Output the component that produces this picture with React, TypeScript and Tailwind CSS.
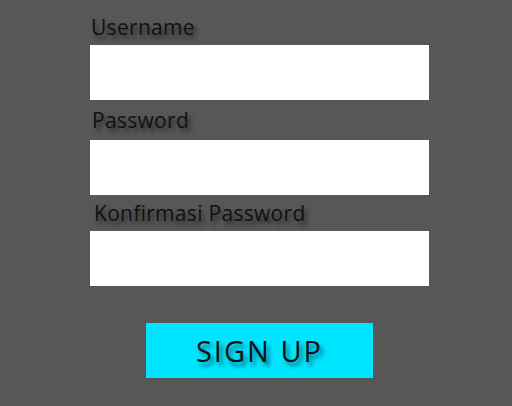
export default function App() {
  return (
    <div className="min-h-[406px] w-full bg-[#575757] font-['Open_Sans',sans-serif]">
      <div className="ml-[90px] w-[339px] pt-[15px]">
        {/* Username */}
        <label className="ml-[1px] block text-[21px] leading-[24px] tracking-[0.3px] text-[#111] [text-shadow:3px_4px_4px_rgba(0,0,0,0.55)]">
          Username
        </label>
        <input type="text" className="mt-[6px] block h-[55px] w-full bg-white outline-none" />

        {/* Password */}
        <label className="ml-[2px] mt-[8px] block text-[21px] leading-[24px] tracking-[0.3px] text-[#111] [text-shadow:3px_4px_4px_rgba(0,0,0,0.55)]">
          Password
        </label>
        <input type="password" className="mt-[8px] block h-[55px] w-full bg-white outline-none" />

        {/* Konfirmasi */}
        <label className="ml-[4px] mt-[6px] block text-[21px] leading-[24px] tracking-[0.3px] text-[#111] [text-shadow:3px_4px_4px_rgba(0,0,0,0.55)]">
          Konfirmasi Password
        </label>
        <input type="password" className="mt-[6px] block h-[55px] w-full bg-white outline-none" />

        <div className="mt-[37px] flex justify-center">
          <button className="h-[55px] w-[227px] bg-[#00e5ff] text-[29px] tracking-[2px] text-[#111] [text-shadow:3px_4px_4px_rgba(0,0,0,0.5)]">
            SIGN UP
          </button>
        </div>
      </div>
    </div>
  );
}
